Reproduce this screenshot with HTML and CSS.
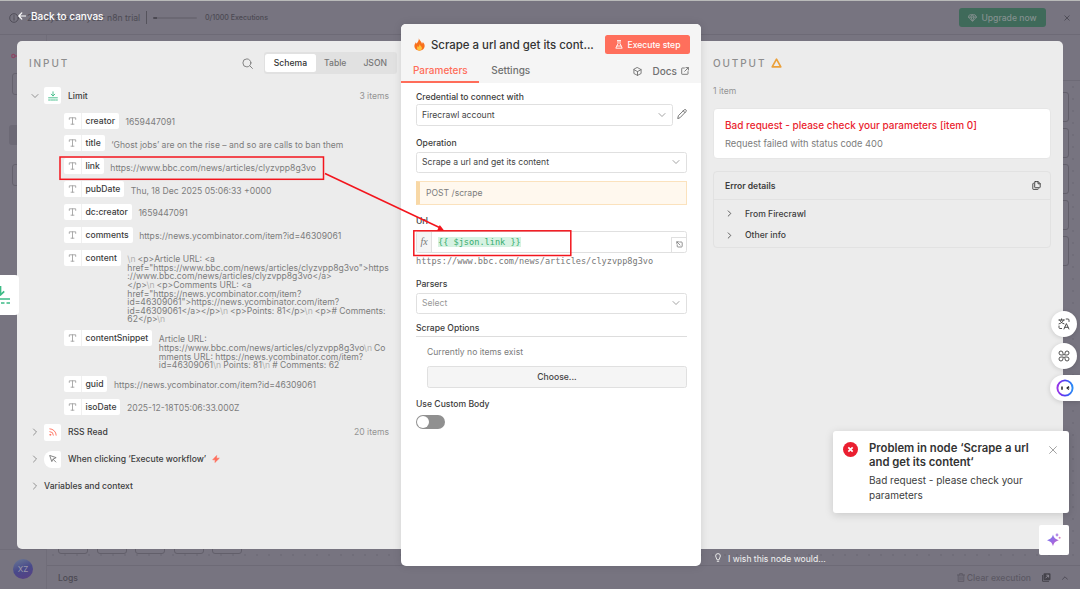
FILE: index.html
```html
<!DOCTYPE html>
<html lang="en">
<head>
    <meta charset="UTF-8">
    <meta name="viewport" content="width=device-width, initial-scale=1.0">
    <title>Scrape a url and get its content</title>
    <link rel="stylesheet" href="styles.css">
</head>
<body>
    <svg class="sprite" width="0" height="0">
        <symbol id="i-type" viewBox="0 0 10 10"><path d="M1 3V1h8v2M5 1v8M3.2 9h3.6"/></symbol>
        <symbol id="i-down" viewBox="0 0 8 8"><path d="M1 2.5l3 3 3-3"/></symbol>
        <symbol id="i-right" viewBox="0 0 8 8"><path d="M2.5 1l3 3-3 3"/></symbol>
        <symbol id="i-limit" viewBox="0 0 10 10"><path d="M5 .8v4M3.2 3.2L5 5l1.8-1.8M.6 6.8h8.8M.6 9h1.8M3.4 9h1.3M5.5 9h1.3M7.7 9h1.7"/></symbol>
    </svg>

    <!-- workflow editor behind the modal -->
    <div class="app">
        <div class="trial-bar">
            <svg class="icon" width="10" height="10" viewBox="0 0 10 10"><circle cx="5" cy="5" r="4.3"/><path d="M5 4.6v2.6M5 2.6v.8"/></svg>
            <span class="trial-text">29 days left in your n8n trial</span>
            <span class="trial-divider"></span>
            <span class="trial-progress"></span>
            <span class="trial-count">0/1000 Executions</span>
            <span class="upgrade">
                <svg class="icon" width="9" height="8" viewBox="0 0 9 8"><path d="M2 .8h5l1.5 2.3L4.5 7.4.5 3.1zM.5 3.1h8M3 3.1l1.5 4L6 3.1 4.5.8z"/></svg>
                Upgrade now
            </span>
            <svg class="icon trial-close" width="6" height="6" viewBox="0 0 6 6"><path d="M.8.8l4.4 4.4M5.2.8L.8 5.2"/></svg>
        </div>
        <div class="app-body">
            <div class="sidebar">
                <svg class="logo" width="12" height="6" viewBox="0 0 12 6"><circle cx="2.3" cy="3" r="1.6"/><path d="M4 3h6"/></svg>
                <div class="side-box"></div>
                <div class="side-box side-active"></div>
                <div class="side-box"></div>
                <div class="side-user"><span class="avatar">XZ</span></div>
            </div>
            <div class="main">
                <div class="main-header"></div>
                <div class="canvas">
                    <div class="node-column"><i></i><i></i><i></i><i></i><i></i></div>
                    <div class="node-row"><i></i><i></i><i></i><i></i><i></i></div>
                </div>
                <div class="logs">
                    <span>Logs</span>
                    <span class="clear">
                        <svg class="icon" width="8" height="9" viewBox="0 0 8 9"><path d="M.4 2h7.2M2.6 2V.6h2.8V2M1.2 2v6.4h5.6V2M3 3.8v3M5 3.8v3"/></svg>
                        Clear execution
                    </span>
                    <svg class="popout" width="9" height="9" viewBox="0 0 9 9"><path class="fill" d="M2.5.3h5a1 1 0 011 1v5a1 1 0 01-1 1h-5a1 1 0 01-1-1v-5a1 1 0 011-1z"/><path class="edge" d="M.6 2v6.3H7"/><path class="arrow" d="M3.5 5.3L6.5 2.3M4.3 2.2h2.3v2.3"/></svg>
                    <svg class="icon" width="6" height="4" viewBox="0 0 6 4"><path d="M.5 3.3L3 .8l2.5 2.5"/></svg>
                </div>
            </div>
        </div>
    </div>

    <!-- node detail view -->
    <div class="ndv">
        <div class="back">
            <svg class="icon" width="8" height="8" viewBox="0 0 8 8"><path d="M7.6 4H.8M3.8.9L.8 4l3 3.1"/></svg>
            Back to canvas
        </div>
        <div class="panels">
            <div class="panel input-panel">
                <div class="panel-head">
                    <h2>INPUT</h2>
                    <svg class="icon search" width="11" height="11" viewBox="0 0 11 11"><circle cx="4.9" cy="4.9" r="4"/><path d="M7.8 7.8l2.6 2.6"/></svg>
                    <div class="view-tabs">
                        <span class="active">Schema</span>
                        <span>Table</span>
                        <span>JSON</span>
                    </div>
                </div>
                <div class="tree-node">
                    <svg class="icon chevron" width="8" height="8"><use href="#i-down"/></svg>
                    <span class="node-icon green"><svg class="icon" width="10" height="10"><use href="#i-limit"/></svg></span>
                    <span class="node-name">Limit</span>
                    <span class="count">3 items</span>
                </div>
                <div class="fields">
                    <div class="field"><span class="pill"><svg class="icon" width="7" height="8"><use href="#i-type"/></svg><b>creator</b></span><p>1659447091</p></div>
                    <div class="field"><span class="pill"><svg class="icon" width="7" height="8"><use href="#i-type"/></svg><b>title</b></span><p>‘Ghost jobs’ are on the rise – and so are calls to ban them</p></div>
                    <div class="field"><span class="pill"><svg class="icon" width="7" height="8"><use href="#i-type"/></svg><b>link</b></span><p>https://www.bbc.com/news/articles/clyzvpp8g3vo</p></div>
                    <div class="field"><span class="pill"><svg class="icon" width="7" height="8"><use href="#i-type"/></svg><b>pubDate</b></span><p>Thu, 18 Dec 2025 05:06:33 +0000</p></div>
                    <div class="field"><span class="pill"><svg class="icon" width="7" height="8"><use href="#i-type"/></svg><b>dc:creator</b></span><p>1659447091</p></div>
                    <div class="field"><span class="pill"><svg class="icon" width="7" height="8"><use href="#i-type"/></svg><b>comments</b></span><p>https://news.ycombinator.com/item?id=46309061</p></div>
                    <div class="field"><span class="pill"><svg class="icon" width="7" height="8"><use href="#i-type"/></svg><b>content</b></span><p><em>\n</em>&lt;p&gt;Article URL: &lt;a<br>href="https://www.bbc.com/news/articles/clyzvpp8g3vo"&gt;https<br>://www.bbc.com/news/articles/clyzvpp8g3vo&lt;/a&gt;<br>&lt;/p&gt;<em>\n</em>&lt;p&gt;Comments URL: &lt;a<br>href="https://news.ycombinator.com/item?<br>id=46309061"&gt;https://news.ycombinator.com/item?<br>id=46309061&lt;/a&gt;&lt;/p&gt;<em>\n</em>&lt;p&gt;Points: 81&lt;/p&gt;<em>\n</em>&lt;p&gt;# Comments:<br>62&lt;/p&gt;<em>\n</em></p></div>
                    <div class="field"><span class="pill"><svg class="icon" width="7" height="8"><use href="#i-type"/></svg><b>contentSnippet</b></span><p>Article URL:<br>https://www.bbc.com/news/articles/clyzvpp8g3vo<em>\n</em>Co<br>mments URL: https://news.ycombinator.com/item?<br>id=46309061<em>\n</em>Points: 81<em>\n</em># Comments: 62</p></div>
                    <div class="field"><span class="pill"><svg class="icon" width="7" height="8"><use href="#i-type"/></svg><b>guid</b></span><p>https://news.ycombinator.com/item?id=46309061</p></div>
                    <div class="field"><span class="pill"><svg class="icon" width="7" height="8"><use href="#i-type"/></svg><b>isoDate</b></span><p>2025-12-18T05:06:33.000Z</p></div>
                </div>
                <div class="tree-node">
                    <svg class="icon chevron" width="8" height="8"><use href="#i-right"/></svg>
                    <span class="node-icon coral"><svg class="icon" width="8" height="8" viewBox="0 0 8 8"><path d="M.8.8a6.4 6.4 0 016.4 6.4M.8 3.6a3.6 3.6 0 013.6 3.6"/><circle cx="1.2" cy="6.8" r=".5"/></svg></span>
                    <span class="node-name">RSS Read</span>
                    <span class="count">20 items</span>
                </div>
                <div class="tree-node">
                    <svg class="icon chevron" width="8" height="8"><use href="#i-right"/></svg>
                    <span class="node-icon trigger"><svg class="icon" width="8" height="8" viewBox="0 0 8 8"><path d="M.8.8l2 5.8 1.2-2.4 2.8-1.4zM4 4.2L6.8 7"/></svg></span>
                    <span class="node-name">When clicking ‘Execute workflow’</span>
                    <svg class="bolt" width="8" height="8" viewBox="0 0 8 8"><path d="M4.7.5L.7 4.8h2.6L2.9 7.5l4.400-4.300H4.400z"/></svg>
                </div>
                <div class="tree-node">
                    <svg class="icon chevron" width="8" height="8"><use href="#i-right"/></svg>
                    <span class="node-name">Variables and context</span>
                </div>
            </div>

            <div class="settings">
                <div class="settings-head">
                    <div class="title-row">
                        <svg class="flame" width="11" height="13" viewBox="0 0 12 14"><path class="outer" d="M5.3.3c.5 2.4 3.1 3.5 3.4 5.8.6-.3.8-1 .8-1.7C11 5.8 11.7 7.4 11.6 9c-.2 3-2.6 4.7-5.6 4.7S.5 11.9.4 9c0-2 1-3 1.5-4.4.5.4.7 1 .8 1.6C4.2 4.7 5.5 2.7 5.3.3z"/><path class="inner" d="M6 6.4c.2 1.6 2.7 2.5 2.7 4.7 0 1.5-1.2 2.4-2.7 2.4s-2.700-1-2.700-2.500c0-1 .5-1.600.8-2.300.3.3.5.6.6 1C5.600 8.900 6.100 7.700 6 6.400z"/></svg>
                        <h1>Scrape a url and get its cont...</h1>
                        <button class="execute">
                            <svg class="icon" width="8" height="9" viewBox="0 0 8 9"><path d="M2.4.6h3.2M3 .6v3L.8 8.2h6.4L5 3.6v-3M2 6h4"/></svg>
                            Execute step
                        </button>
                    </div>
                    <div class="tabs">
                        <span class="tab active">Parameters</span>
                        <span class="tab">Settings</span>
                        <svg class="icon cube" width="9" height="9" viewBox="0 0 9 9"><path d="M4.5.6l3.600 2v3.900L4.500 8.400.9 6.500V2.600zM.9 2.600l3.600 2 3.600-2M4.500 4.600v3.800"/></svg>
                        <span class="docs">Docs</span>
                        <svg class="icon" width="8" height="8" viewBox="0 0 8 8"><path d="M3.4 1H1.200a.5.5 0 00-.5.5v5.300a.5.5 0 00.5.5h5.300a.5.5 0 00.5-.5V4.600M4.900.6h2.500v2.500M7.300.7L3.700 4.300"/></svg>
                    </div>
                </div>
                <div class="form">
                    <label>Credential to connect with</label>
                    <div class="credential">
                        <div class="select">Firecrawl account<svg class="icon" width="8" height="8"><use href="#i-down"/></svg></div>
                        <svg class="icon pencil" width="10" height="10" viewBox="0 0 10 10"><path d="M.8 9.2l.6-2.500L7.200.9a1.100 1.100 0 011.700 0 1.100 1.100 0 010 1.700L3.200 8.500zM6.300 1.900l1.700 1.700"/></svg>
                    </div>
                    <label class="operation">Operation</label>
                    <div class="select">Scrape a url and get its content<svg class="icon" width="8" height="8"><use href="#i-down"/></svg></div>
                    <div class="notice">POST /scrape</div>
                    <label class="url">Url</label>
                    <div class="expression">
                        <span class="fx">fx</span>
                        <code>{{ $json.link }}</code>
                        <span class="expand"><svg class="icon" width="7" height="7" viewBox="0 0 7 7"><path d="M3.6 1h1.800a.8.8 0 01.8.8v3.400a.8.8 0 01-.8.8H2a.8.8 0 01-.8-.8V3.700M.8 2.500V.8h1.700M.9.9L4 4"/></svg></span>
                    </div>
                    <div class="preview">https://www.bbc.com/news/articles/clyzvpp8g3vo</div>
                    <label class="parsers">Parsers</label>
                    <div class="select placeholder">Select<svg class="icon" width="8" height="8"><use href="#i-down"/></svg></div>
                    <div class="section-title">Scrape Options</div>
                    <div class="options">
                        <p>Currently no items exist</p>
                        <button class="choose">Choose...</button>
                    </div>
                    <label class="custom">Use Custom Body</label>
                    <div class="toggle"></div>
                </div>
            </div>

            <div class="panel output-panel">
                <div class="panel-head">
                    <h2>OUTPUT</h2>
                    <svg class="warning" width="11" height="10" viewBox="0 0 11 10"><path d="M5.5 1.200l4.300 7.600H1.200z"/></svg>
                </div>
                <div class="item-count">1 item</div>
                <div class="error-card">
                    <h3>Bad request - please check your parameters [item 0]</h3>
                    <p>Request failed with status code 400</p>
                </div>
                <div class="details">
                    <div class="details-head">
                        Error details
                        <svg class="icon" width="9" height="9" viewBox="0 0 9 9"><path d="M3.2.6h3l2 2v3.600a.5.5 0 01-.5.5H3.200a.5.5 0 01-.5-.5V1.100a.5.5 0 01.5-.5zM6 .7v2.100h2.100M1.500 2.300h-.2a.5.5 0 00-.5.5v5.100a.5.5 0 00.5.5h4.500a.5.5 0 00.5-.5"/></svg>
                    </div>
                    <div class="details-row"><svg class="icon" width="7" height="7"><use href="#i-right"/></svg>From Firecrawl</div>
                    <div class="details-row"><svg class="icon" width="7" height="7"><use href="#i-right"/></svg>Other info</div>
                </div>
            </div>
        </div>
        <div class="wish">
            <svg class="icon" width="6" height="9" viewBox="0 0 6 9"><path d="M2 6.400C2 5.200.6 4.700.6 3a2.400 2.400 0 014.800 0c0 1.700-1.400 2.200-1.400 3.400zM2.200 8.300h1.600"/></svg>
            I wish this node would...
        </div>
    </div>

    <!-- floating widgets -->
    <div class="prev-node"><svg class="icon" width="20" height="20" viewBox="0 0 20 20"><path d="M5.500 1v9M2 6.500l3.500 3.500 3.700-3.700M0 14h15M0 18h3.500M6 18h3.500M11.500 18H15"/></svg></div>

    <div class="side-tools">
        <span class="tool"><svg class="icon" width="12" height="12" viewBox="0 0 12 12"><path d="M.8 2h5.600M3.600.8V2M5.500 2C5 3.900 3 5.300 1 5.900M1.700 2C2.300 3.900 4 5.300 6 5.800M6 11l2.400-5.400L10.900 11M6.900 9.300H10M8.200 1h1.800a1 1 0 011 1v1.500M1 8v1.500a1 1 0 001 1h1.600"/></svg></span>
        <span class="tool"><svg class="icon" width="12" height="12" viewBox="0 0 12 12"><path d="M5 5H3.100A2 2 0 115 3zM7 5h1.900A2 2 0 107 3zM5 7H3.100A2 2 0 105 9zM7 7h1.900A2 2 0 117 9z"/></svg></span>
        <span class="tool bot"><svg width="18" height="18" viewBox="0 0 18 18"><defs><linearGradient id="ring" x1="0" y1=".6" x2="1" y2=".6"><stop offset="0" stop-color="#9a35e8"/><stop offset=".5" stop-color="#4b3df2"/><stop offset="1" stop-color="#2b8df5"/></linearGradient></defs><circle cx="9" cy="9" r="7.600" fill="none" stroke="url(#ring)" stroke-width="1.900"/><path d="M6 7.400v3.400M13 7.600L11.300 9l1.700 1.400" fill="none" stroke="#222" stroke-width="1.500"/></svg></span>
    </div>

    <div class="toast">
        <svg class="toast-icon" width="15" height="15" viewBox="0 0 15 15"><circle cx="7.500" cy="7.500" r="7.500"/><path d="M5.300 5.300l4.400 4.400M9.700 5.300L5.300 9.700"/></svg>
        <div class="toast-text">
            <h4>Problem in node ‘Scrape a url<br>and get its content‘</h4>
            <p>Bad request - please check your<br>parameters</p>
        </div>
        <svg class="icon" width="8" height="8" viewBox="0 0 8 8"><path d="M.6.6l6.800 6.800M7.400.6L.6 7.400"/></svg>
    </div>

    <div class="assistant">
        <svg width="14" height="14" viewBox="0 0 14 14"><defs><linearGradient id="spark" x1="0" y1="0" x2="1" y2="1"><stop offset="0" stop-color="#6c7bf0"/><stop offset=".6" stop-color="#a268e0"/><stop offset="1" stop-color="#d8609f"/></linearGradient></defs><path fill="url(#spark)" d="M6 1.500c1 3.400 2.200 4.600 5.800 5.700C8.200 8.300 7 9.500 6 13.200 5 9.500 3.700 8.300 0 7.200 3.700 6.100 5 4.900 6 1.500z"/><circle cx="10" cy="2" r="1.400" fill="#b58ce8"/><circle cx="12.600" cy="4.800" r="1" fill="#d887c0"/></svg>
    </div>

    <svg class="marks" width="1080" height="589" viewBox="0 0 1080 589">
        <rect x="60" y="157" width="263.500" height="22.300"/>
        <rect x="413.800" y="230.800" width="157" height="24.700"/>
        <path d="M325 173.500L440 227.800"/>
        <path class="tip" d="M444.500 231l-7.500-.3 2.800-5.600z"/>
    </svg>
</body>
</html>
```

FILE: styles.css
```css
* {
    box-sizing: border-box;
}
body {
    margin: 0;
    width: 1080px;
    height: 589px;
    position: relative;
    overflow: hidden;
    font-family: Inter, "Liberation Sans", sans-serif;
    font-size: 8.6px;
    line-height: 12px;
    color: #3c3c3c;
    background-color: #777480;
}
h1, h2, h3, h4, p {
    margin: 0;
}
svg {
    display: block;
    flex: none;
}
.sprite {
    position: absolute;
}
.icon {
    fill: none;
    stroke: currentColor;
    stroke-width: 0.9;
    stroke-linecap: round;
    stroke-linejoin: round;
}
button {
    font: inherit;
    padding: 0;
    border: none;
}

/* editor behind */
.app {
    height: 589px;
    display: flex;
    flex-direction: column;
    border-top: 1px solid #b9bab9;
    color: #4c4a53;
}
.trial-bar {
    height: 34px;
    flex: none;
    display: flex;
    align-items: center;
    padding: 0 10px 0 9px;
    border-bottom: 1px solid #6d6a76;
}
.trial-text {
    margin-left: 8px;
    width: 113px;
    white-space: nowrap;
}
.trial-divider {
    width: 1px;
    height: 13px;
    margin-left: 6px;
    background-color: #55535c;
}
.trial-progress {
    width: 44px;
    height: 2px;
    margin-left: 6px;
    border-radius: 2px;
    background: linear-gradient(to right, #4c4a53 4px, #6b6873 4px);
}
.trial-count {
    margin-left: 8px;
    font-size: 7.1px;
    font-weight: 500;
}
.upgrade {
    margin-left: auto;
    width: 87px;
    height: 19px;
    display: flex;
    align-items: center;
    justify-content: center;
    gap: 4px;
    border-radius: 3px;
    background-color: #3f6a5a;
    color: #84908f;
    font-weight: 500;
}
.trial-close {
    margin: 0 0 0 18px;
}
.app-body {
    flex: 1;
    display: flex;
}
.sidebar {
    width: 47px;
    display: flex;
    flex-direction: column;
    padding-top: 18px;
    border-right: 1px solid #706d79;
}
.logo {
    margin-left: 11px;
    fill: none;
    stroke: #8c4664;
    stroke-width: 1.2;
}
.side-box {
    width: 30px;
    height: 22px;
    margin: 14px 0 0 12px;
    border: 1px solid #65626d;
    border-radius: 3px;
}
.side-box.side-active {
    height: 20px;
    margin: 30px 0 5px 9px;
    border: none;
    background-color: #6c6975;
}
.side-user {
    margin-top: auto;
    height: 40px;
    padding: 9px 13px;
    border-top: 1px solid #706d79;
}
.avatar {
    display: block;
    width: 20px;
    height: 20px;
    border-radius: 50%;
    background: linear-gradient(160deg, #6b7a95, #48498a 50%, #5a3f83);
    color: #9b98a8;
    font-size: 8px;
    line-height: 20px;
    text-align: center;
}
.main {
    flex: 1;
    display: flex;
    flex-direction: column;
}
.main-header {
    height: 46px;
    border-bottom: 1px solid #6d6a76;
}
.canvas {
    position: relative;
    flex: 1;
    background-image: radial-gradient(circle, #6d6a75 0.6px, transparent 0.9px);
    background-size: 12px 12px;
}
.node-column {
    position: absolute;
    top: 11px;
    right: 11px;
    display: grid;
    gap: 6px;
}
.node-row {
    position: absolute;
    left: 11px;
    bottom: 11px;
    display: flex;
    gap: 8.6px;
}
.canvas i {
    width: 30px;
    height: 30px;
    border: 1px solid #625f6a;
    border-radius: 3px;
}
.logs {
    height: 24px;
    display: flex;
    align-items: center;
    padding: 0 12px 0 11px;
    border-top: 1px solid #6d6a76;
    font-weight: 500;
}
.logs .clear {
    display: flex;
    align-items: center;
    gap: 2px;
    margin-left: auto;
    margin-right: 11px;
    color: #5c5964;
}
.popout {
    margin-right: 11px;
}
.popout .fill {
    fill: #45434b;
}
.popout .edge {
    fill: none;
    stroke: #45434b;
}
.popout .arrow {
    fill: none;
    stroke: #8a8792;
}

/* node detail view */
.ndv {
    position: absolute;
    inset: 0;
    display: flex;
    flex-direction: column;
}
.back {
    height: 41px;
    display: flex;
    gap: 5px;
    padding: 10px 0 0 18px;
    color: #fff;
    font-size: 10px;
    font-weight: 500;
}
.back .icon {
    margin-top: 2px;
    stroke-width: 1.2;
}
.panels {
    height: 508px;
    display: grid;
    grid-template-columns: 384px 300px 362px;
    padding-left: 17px;
}
.panel {
    background-color: #ececec;
}
.input-panel {
    border-radius: 5px 0 0 5px;
    padding: 11px 4px 0 12px;
}
.output-panel {
    border-radius: 0 5px 5px 0;
    padding: 11px 12px 0 12px;
}
.panel-head {
    height: 22px;
    display: flex;
    align-items: center;
}
.panel-head h2 {
    font-size: 10px;
    font-weight: 500;
    letter-spacing: 1.9px;
    color: #8d8d8d;
}
.search {
    margin-left: auto;
    color: #777;
}
.view-tabs {
    display: flex;
    margin-left: 11px;
    padding: 1.5px;
    border-radius: 3px;
    background-color: #e1e1e1;
    font-weight: 500;
    color: #777;
    line-height: 18.5px;
}
.view-tabs span {
    padding: 0 8.5px;
    border-radius: 2.5px;
}
.view-tabs .active {
    background-color: #fff;
    color: #333;
}
.tree-node {
    height: 27px;
    display: flex;
    align-items: center;
    padding-right: 8px;
    padding-left: 2px;
    font-weight: 500;
}
.panel-head + .tree-node {
    margin-top: 8px;
}
.chevron {
    color: #888;
    margin-right: 5px;
}
.node-icon {
    width: 17px;
    height: 17px;
    display: flex;
    align-items: center;
    justify-content: center;
    margin-right: 7px;
    border-radius: 2px;
    background-color: #fff;
}
.node-icon.green {
    color: #3dbb86;
}
.node-icon.coral {
    color: #ff6d5a;
}
.node-icon.trigger {
    color: #777;
    border-radius: 8px 2px 2px 8px;
}
.count {
    margin-left: auto;
    font-weight: 400;
    color: #949494;
}
.bolt {
    margin-left: 6px;
    fill: #ff6d5a;
    stroke: #ff6d5a;
    stroke-width: 0.6;
}
.fields {
    padding: 3.5px 0 0 34.5px;
    margin-bottom: -2.7px;
}
.field {
    display: flex;
    align-items: flex-start;
    gap: 6.5px;
    margin-bottom: 6.85px;
}
.pill {
    height: 16px;
    flex: none;
    display: flex;
    align-items: center;
    padding-right: 4px;
    border-radius: 2px;
    background-color: #fff;
}
.pill .icon {
    width: 17px;
    color: #a0a0a0;
    stroke-width: 1.1;
}
.pill b {
    padding-left: 4px;
    border-left: 1px solid #f0f0f0;
    font-weight: 500;
    line-height: 16px;
}
.field p {
    padding-top: 5.6px;
    margin-bottom: -0.9px;
    line-height: 8.6px;
    color: #7c7c7c;
    white-space: nowrap;
}
.field em {
    font-style: normal;
    color: #b0b0b0;
    margin-right: 2px;
}

/* parameters */
.settings {
    margin: -17px 0;
    border-radius: 5px;
    background-color: #fff;
    overflow: hidden;
    box-shadow: 0 0 8px rgba(0, 0, 0, 0.12);
    z-index: 1;
}
.settings-head {
    height: 59px;
    display: flex;
    flex-direction: column;
    justify-content: space-between;
    background-color: #f5f5f5;
}
.title-row {
    display: flex;
    align-items: center;
    padding: 11px 11px 0 13px;
}
.flame {
    margin-right: 6px;
}
.flame .outer {
    fill: #f8701c;
}
.flame .inner {
    fill: #ffc23c;
}
h1 {
    font-size: 11.4px;
    font-weight: 500;
    line-height: 18px;
    color: #333;
}
.execute {
    display: flex;
    align-items: center;
    justify-content: center;
    gap: 5px;
    width: 85px;
    height: 19px;
    margin-left: auto;
    border-radius: 2.5px;
    background-color: #ff6f5c;
    color: #fff;
    font-weight: 500;
}
.tabs {
    display: flex;
    align-items: center;
    height: 24px;
    padding-right: 12px;
    font-size: 10px;
    font-weight: 500;
    color: #707070;
}
.tab {
    padding: 0 11.5px 0 12px;
    line-height: 22px;
    border-bottom: 2px solid transparent;
}
.tab.active {
    color: #ff6d5a;
    border-color: #ff6d5a;
}
.cube {
    margin-left: auto;
    margin-right: 11px;
}
.docs {
    margin-right: 4px;
}
.form {
    padding: 8px 14px 0 15px;
}
.form label {
    display: block;
    font-weight: 500;
}
.credential {
    display: flex;
    align-items: center;
    gap: 4px;
}
.pencil {
    color: #666;
}
.select {
    flex: 1;
    height: 21.5px;
    display: flex;
    align-items: center;
    justify-content: space-between;
    margin-top: 1px;
    padding: 0 6px 0 5px;
    border: 1px solid #e0e0e0;
    border-radius: 2.5px;
    color: #444;
}
.select .icon {
    color: #999;
}
.select.placeholder {
    color: #999;
}
.form .operation {
    margin: 11px 0 3px;
}
.notice {
    height: 24px;
    margin-top: 8px;
    padding-left: 6px;
    border: 1px solid #fbe2bd;
    border-left: 4.5px solid #f8d8a6;
    background-color: #fff8ee;
    color: #7c7c7c;
    line-height: 23px;
}
.form .url {
    margin: 10px 0 4px;
}
.expression {
    height: 21.5px;
    display: flex;
    align-items: center;
    border: 1px solid #e0e0e0;
    border-radius: 2.5px;
}
.fx {
    width: 15px;
    height: 100%;
    border-right: 1px solid #e0e0e0;
    background-color: #f5f5f5;
    font-family: "Liberation Serif", serif;
    font-style: italic;
    font-size: 10px;
    line-height: 19px;
    text-align: center;
    color: #777;
}
.expression code {
    margin-left: 6px;
    background-color: #d6f2e2;
    color: #37ad70;
    font-family: "DejaVu Sans Mono", monospace;
    font-size: 8.6px;
    line-height: 10px;
}
.expand {
    width: 15px;
    height: 15px;
    display: flex;
    align-items: center;
    justify-content: center;
    align-self: flex-end;
    margin-left: auto;
    border-left: 1px solid #e0e0e0;
    border-top: 1px solid #e0e0e0;
}
.expand .icon {
    color: #666;
    stroke-width: 0.7;
}
.preview {
    margin-top: 2px;
    font-family: "DejaVu Sans Mono", monospace;
    font-size: 8.57px;
    color: #777;
}
.form .parsers {
    margin: 11px 0 3px;
}
.section-title {
    margin-top: 8px;
    padding-bottom: 2px;
    border-bottom: 1px solid #ddd;
    font-weight: 500;
}
.options {
    padding: 9px 0 0 11px;
    color: #7c7c7c;
}
.choose {
    width: 100%;
    height: 22px;
    margin-top: 8px;
    border: 1px solid #e0e0e0;
    border-radius: 2.5px;
    background-color: #f5f5f5;
    font-weight: 500;
    color: #444;
}
.form .custom {
    margin: 10px 0 5px;
}
.toggle {
    width: 28.5px;
    height: 14px;
    padding: 1px;
    border-radius: 7px;
    background-color: #909090;
}
.toggle::before {
    content: "";
    display: block;
    width: 12px;
    height: 12px;
    border-radius: 50%;
    background-color: #fff;
}

/* output */
.warning {
    margin-left: 5px;
    fill: none;
    stroke: #eba03a;
    stroke-width: 1.7;
    stroke-linejoin: round;
}
.item-count {
    margin-top: 11px;
    color: #949494;
}
.error-card {
    height: 51px;
    margin-top: 11px;
    padding: 10px 11px;
    border: 1px solid #e6e6e6;
    border-radius: 4px;
    background-color: #fff;
}
.error-card h3 {
    font-size: 10px;
    font-weight: 500;
    color: #ea1f30;
}
.error-card p {
    margin-top: 7px;
    font-size: 9.3px;
    color: #7c7c7c;
}
.details {
    height: 77px;
    margin-top: 12px;
    border: 1px solid #e2e2e2;
    border-radius: 4px;
}
.details-head {
    height: 28px;
    display: flex;
    align-items: center;
    justify-content: space-between;
    padding: 0 9px 0 11px;
    margin-bottom: 3px;
    border-bottom: 1px solid #e2e2e2;
    font-weight: 600;
}
.details-row {
    display: flex;
    align-items: center;
    gap: 12px;
    height: 21.5px;
    padding-left: 12px;
    font-weight: 500;
}
.wish {
    display: flex;
    gap: 7px;
    padding: 4px 0 0 715px;
    color: #f2f2f2;
}

/* floating */
.prev-node {
    position: absolute;
    left: 0;
    top: 275px;
    width: 19px;
    height: 40px;
    overflow: hidden;
    border-radius: 0 4px 4px 0;
    background-color: #fff;
    color: #3dbb86;
}
.prev-node .icon {
    margin: 10px 0 0 -5px;
    stroke-width: 1.7;
    stroke-linecap: butt;
}
.side-tools {
    position: absolute;
    top: 311px;
    right: 0;
    display: flex;
    flex-direction: column;
    gap: 6px;
}
.tool {
    width: 26px;
    height: 26px;
    display: flex;
    align-items: center;
    justify-content: center;
    margin-left: 1px;
    border-radius: 13px;
    background-color: #fff;
    box-shadow: 0 1px 5px rgba(0, 0, 0, 0.15);
}
.tool.bot {
    width: 30px;
    margin-left: 0;
    border-radius: 13px 0 0 13px;
}
.toast {
    position: absolute;
    left: 833px;
    top: 431px;
    width: 235.5px;
    height: 82px;
    display: flex;
    align-items: flex-start;
    padding: 11px 12px 0 10px;
    border-radius: 3px;
    background-color: #fff;
    box-shadow: 0 2px 8px rgba(0, 0, 0, 0.15);
}
.toast-icon {
    fill: #ea1f30;
}
.toast-icon path {
    stroke: #fff;
    stroke-width: 1.7;
}
.toast-text {
    flex: 1;
    padding-left: 11px;
}
.toast h4 {
    font-size: 11.3px;
    font-weight: 600;
    line-height: 14px;
    margin-top: -1px;
    color: #333;
}
.toast p {
    margin-top: 4px;
    font-size: 10px;
    line-height: 15px;
}
.toast > .icon {
    margin-top: 4px;
    color: #999;
}
.assistant {
    position: absolute;
    left: 1039px;
    top: 525px;
    width: 30px;
    height: 30px;
    display: flex;
    align-items: center;
    justify-content: center;
    border-radius: 2px;
    background-color: #fff;
}
.marks {
    position: absolute;
    z-index: 2;
    inset: 0;
    fill: none;
    stroke: #f3151d;
    stroke-width: 1.5;
}
.marks .tip {
    fill: #f3151d;
    stroke: none;
}
```
